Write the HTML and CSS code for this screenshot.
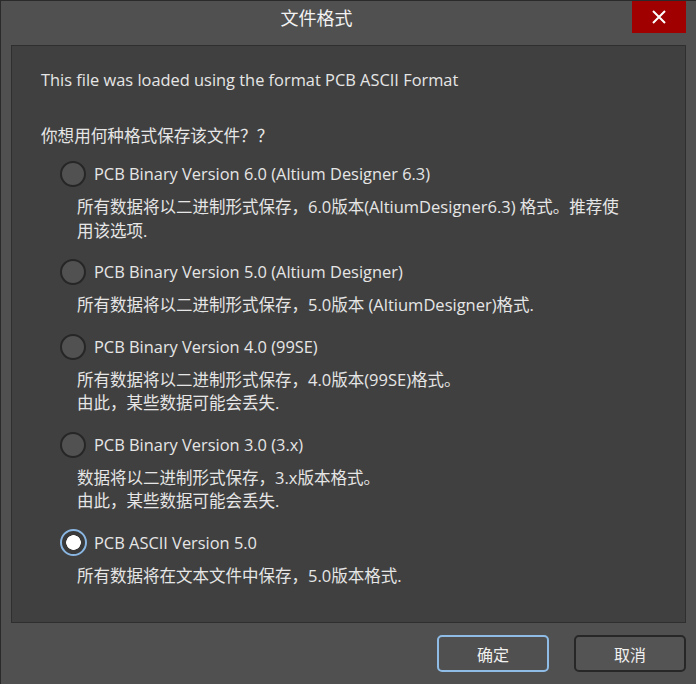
FILE: index.html
```html
<!DOCTYPE html>
<html lang="zh">
<head>
<meta charset="utf-8">
<title>文件格式</title>
<link rel="stylesheet" href="styles.css">
</head>
<body>
<div class="window">
  <div class="titlebar">
    <div class="title">文件格式</div>
    <button class="close" aria-label="关闭">
      <svg width="14" height="14" viewBox="0 0 14 14"><path d="M1 1 L13 13 M13 1 L1 13" stroke="#fff" stroke-width="2" fill="none"/></svg>
    </button>
  </div>
  <div class="panel">
    <p class="intro">This file was loaded using the format PCB ASCII Format</p>
    <p class="question">你想用何种格式保存该文件？？</p>
    <div class="options">
      <div class="option">
        <div class="row"><span class="radio"></span><span class="label">PCB Binary Version 6.0 (Altium Designer 6.3)</span></div>
        <div class="desc">所有数据将以二进制形式保存，6.0版本(AltiumDesigner6.3) 格式。推荐使<br>用该选项.</div>
      </div>
      <div class="option">
        <div class="row"><span class="radio"></span><span class="label">PCB Binary Version 5.0 (Altium Designer)</span></div>
        <div class="desc">所有数据将以二进制形式保存，5.0版本 (AltiumDesigner)格式.</div>
      </div>
      <div class="option">
        <div class="row"><span class="radio"></span><span class="label">PCB Binary Version 4.0 (99SE)</span></div>
        <div class="desc">所有数据将以二进制形式保存，4.0版本(99SE)格式。<br>由此，某些数据可能会丢失.</div>
      </div>
      <div class="option">
        <div class="row"><span class="radio"></span><span class="label">PCB Binary Version 3.0 (3.x)</span></div>
        <div class="desc">数据将以二进制形式保存，3.x版本格式。<br>由此，某些数据可能会丢失.</div>
      </div>
      <div class="option">
        <div class="row"><span class="radio checked"></span><span class="label">PCB ASCII Version 5.0</span></div>
        <div class="desc">所有数据将在文本文件中保存，5.0版本格式.</div>
      </div>
    </div>
  </div>
  <div class="footer">
    <button class="btn primary">确定</button>
    <button class="btn">取消</button>
  </div>
</div>
</body>
</html>
```

FILE: styles.css
```css
html, body {
  margin: 0;
  padding: 0;
  background: #505050;
}
body {
  font-family: "Open Sans", "Noto Sans CJK SC", sans-serif;
  color: #e6e6e6;
  font-size: 16.4px;
}
.window {
  width: 696px;
  height: 684px;
  box-sizing: border-box;
  border-left: 1px solid #2a2a2a;
  border-top: 1px solid #2a2a2a;
  background: #505050;
  display: flex;
  flex-direction: column;
}
.titlebar {
  height: 44px;
  display: flex;
  align-items: flex-start;
}
.title {
  flex: 1;
  text-align: center;
  font-family: "Noto Sans CJK SC", sans-serif;
  font-size: 18px;
  line-height: 30px;
  color: #f2f2f2;
  padding-top: 1px;
}
.close {
  width: 54px;
  height: 32px;
  margin: 0 10px 0 0;
  border: 0;
  padding: 0;
  background: #a00000;
  display: flex;
  align-items: center;
  justify-content: center;
}
.panel {
  margin: 0 10px 0 10px;
  height: 578px;
  box-sizing: border-box;
  border: 1px solid #2f2f2f;
  background: #404040;
  padding: 22px 0 0 29px;
}
.intro, .question {
  margin: 0;
  line-height: 24px;
}
.question {
  margin-top: 31px;
  font-family: "Noto Sans CJK SC", sans-serif;
  font-size: 16.6px;
}
.options {
  margin: 14px 0 0 19px;
  display: flex;
  flex-direction: column;
  gap: 17px;
}
.row {
  display: flex;
  align-items: center;
  height: 26px;
  gap: 8px;
}
.radio {
  width: 26px;
  height: 26px;
  box-sizing: border-box;
  border-radius: 50%;
  border: 2px solid #262626;
  background: #515151;
  flex: none;
}
.radio.checked {
  width: 27px;
  height: 27px;
  margin-left: -0.5px;
  margin-right: -0.5px;
  border: 2px solid #8ab6e2;
  background: radial-gradient(circle, #ffffff 0 7px, #3a3a3a 7.6px);
}
.label {
  line-height: 26px;
}
.desc {
  margin: 8px 0 0 17px;
  line-height: 23.5px;
  white-space: nowrap;
  font-size: 16.5px;
}
.footer {
  display: flex;
  justify-content: flex-end;
  gap: 25px;
  padding: 12px 10px 0 0;
}
.btn {
  width: 112px;
  height: 37px;
  box-sizing: border-box;
  border-radius: 5px;
  border: 2px solid #272727;
  background: #545454;
  color: #f0f0f0;
  font-family: "Noto Sans CJK SC", sans-serif;
  font-size: 16px;
  padding: 0;
}
.btn.primary {
  border-color: #8fbce6;
  background: #505050;
}
```
